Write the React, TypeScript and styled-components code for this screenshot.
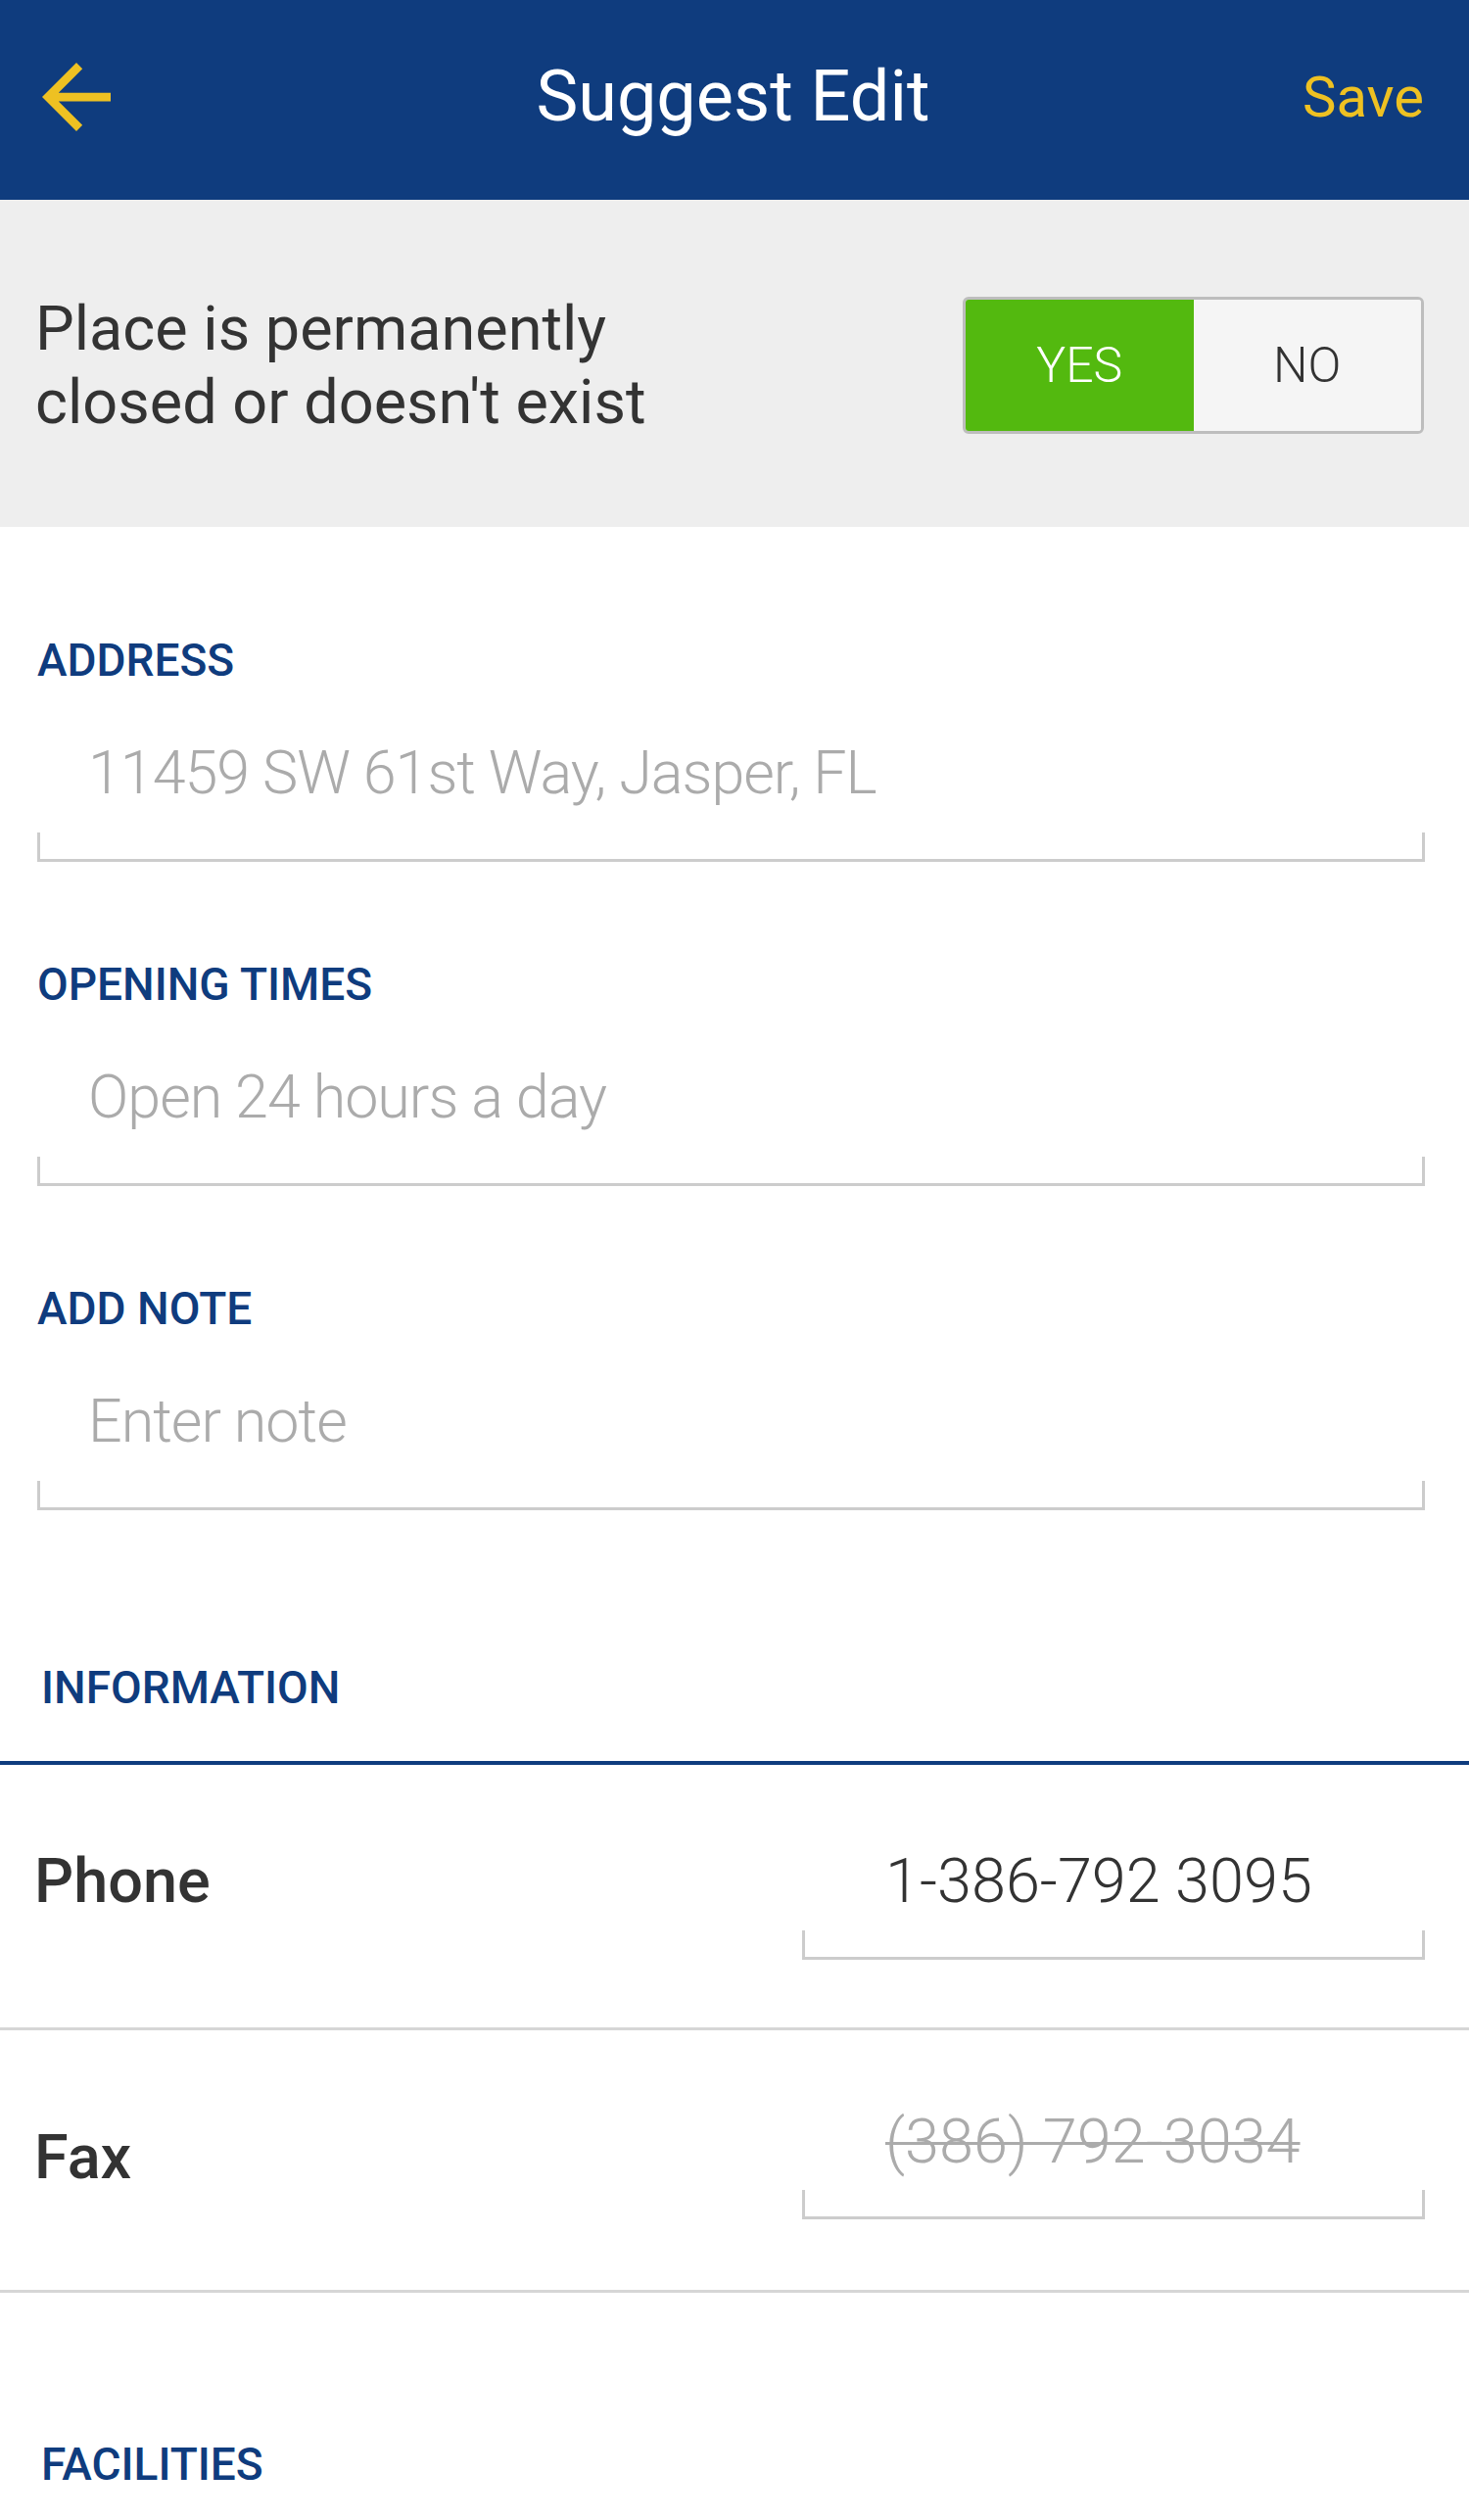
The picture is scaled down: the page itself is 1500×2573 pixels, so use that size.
import React from "react";
import styled, { createGlobalStyle } from "styled-components";

const BLUE = "#0f3c7e";
const YELLOW = "#eec122";

const GlobalStyle = createGlobalStyle`
  html, body {
    margin: 0;
    padding: 0;
    background: #ffffff;
    font-family: Roboto, "Noto Sans", "Liberation Sans", sans-serif;
    -webkit-font-smoothing: antialiased;
  }
  * { box-sizing: border-box; }
`;

const Page = styled.div`
  width: 1500px;
  background: #ffffff;
  padding-bottom: 30px;
`;

const Toolbar = styled.header`
  height: 204px;
  background: ${BLUE};
  display: grid;
  grid-template-columns: 1fr auto 1fr;
  align-items: center;
  padding: 0 46px 6px 43px;
`;

const BackButton = styled.button`
  justify-self: start;
  display: flex;
  align-items: center;
  background: none;
  border: none;
  padding: 0;
  cursor: pointer;
  svg { display: block; }
`;

const Title = styled.h1`
  margin: 0;
  font-weight: 400;
  font-size: 72px;
  line-height: 84px;
  color: #ffffff;
  white-space: nowrap;
`;

const SaveButton = styled.button`
  justify-self: end;
  background: none;
  border: none;
  padding: 0;
  font-family: inherit;
  font-weight: 400;
  font-size: 58px;
  line-height: 70px;
  color: ${YELLOW};
  cursor: pointer;
`;

const ClosedBanner = styled.section`
  height: 334px;
  background: #eeeeee;
  display: flex;
  align-items: center;
  justify-content: space-between;
  padding: 4px 46px 0 36px;
`;

const ClosedText = styled.p`
  margin: 0;
  font-size: 63px;
  line-height: 75px;
  color: #333333;
`;

const Toggle = styled.div`
  display: flex;
  width: 471px;
  height: 140px;
  border: 3px solid #bdbdbd;
  border-radius: 6px;
  overflow: hidden;
  background: #f5f5f5;
`;

const ToggleOption = styled.button<{ $active?: boolean }>`
  flex: 1;
  display: flex;
  align-items: center;
  justify-content: center;
  border: none;
  padding: 0;
  font-family: inherit;
  font-weight: 300;
  font-size: 50px;
  background: ${(p) => (p.$active ? "#53b90f" : "#f5f5f5")};
  color: ${(p) => (p.$active ? "#ffffff" : "#333333")};
  cursor: pointer;
`;

const Form = styled.section`
  padding: 109px 45px 0 38px;
  display: flex;
  flex-direction: column;
  gap: 98px;
`;

const Field = styled.div`
  display: flex;
  flex-direction: column;
`;

const SectionLabel = styled.h2`
  margin: 0;
  font-weight: 500;
  font-size: 46px;
  line-height: 54px;
  color: ${BLUE};
`;

const FieldValue = styled.div<{ $placeholder?: boolean }>`
  margin-top: 52px;
  padding-left: 52px;
  font-weight: 300;
  font-size: 61px;
  line-height: 72px;
  letter-spacing: -1px;
  color: ${(p) => (p.$placeholder ? "#ababab" : "#333333")};
  white-space: nowrap;
`;

const Bracket = styled.div<{ $gap: number }>`
  margin-top: ${(p) => p.$gap}px;
  height: 30px;
  border: 3px solid #cccccc;
  border-top: none;
`;

const InfoHeader = styled.div`
  margin-top: 154px;
  padding: 0 45px 48px 42px;
  border-bottom: 4px solid ${BLUE};
`;

const InfoRow = styled.div<{ $labelTop: number; $valueTop: number; $height: number }>`
  height: ${(p) => p.$height}px;
  display: flex;
  align-items: flex-start;
  justify-content: space-between;
  padding: 0 45px 0 35px;
  border-bottom: 3px solid #d6d6d6;

  & > :first-child {
    margin-top: ${(p) => p.$labelTop}px;
  }
  & > :last-child {
    margin-top: ${(p) => p.$valueTop}px;
  }
`;

const InfoLabel = styled.div`
  font-weight: 500;
  font-size: 63px;
  line-height: 74px;
  color: #333333;
`;

const InfoInput = styled.div`
  width: 636px;
  display: flex;
  flex-direction: column;
`;

const InfoValue = styled.div<{ $struck?: boolean }>`
  padding-left: 85px;
  font-weight: 300;
  font-size: 63px;
  line-height: 74px;
  white-space: nowrap;
  color: ${(p) => (p.$struck ? "#ababab" : "#333333")};
  text-decoration: ${(p) => (p.$struck ? "line-through" : "none")};
  text-decoration-thickness: 3px;
`;

const FacilitiesHeader = styled.div`
  padding: 148px 45px 0 42px;
`;

const ArrowIcon = () => (
  <svg width="70" height="70" viewBox="4 4 16 16" aria-hidden="true">
    <path
      d="M20 11H7.83l5.59-5.59L12 4l-8 8 8 8 1.41-1.41L7.83 13H20v-2z"
      fill={YELLOW}
    />
  </svg>
);

export default function App() {
  return (
    <Page>
      <GlobalStyle />
      <Toolbar>
        <BackButton aria-label="Back">
          <ArrowIcon />
        </BackButton>
        <Title>Suggest Edit</Title>
        <SaveButton>Save</SaveButton>
      </Toolbar>

      <ClosedBanner>
        <ClosedText>
          Place is permanently
          <br />
          closed or doesn't exist
        </ClosedText>
        <Toggle>
          <ToggleOption $active>YES</ToggleOption>
          <ToggleOption>NO</ToggleOption>
        </Toggle>
      </ClosedBanner>

      <Form>
        <Field>
          <SectionLabel>ADDRESS</SectionLabel>
          <FieldValue $placeholder>11459 SW 61st Way, Jasper, FL</FieldValue>
          <Bracket $gap={25} />
        </Field>
        <Field>
          <SectionLabel>OPENING TIMES</SectionLabel>
          <FieldValue $placeholder>Open 24 hours a day</FieldValue>
          <Bracket $gap={25} />
        </Field>
        <Field>
          <SectionLabel>ADD NOTE</SectionLabel>
          <FieldValue $placeholder>Enter note</FieldValue>
          <Bracket $gap={25} />
        </Field>
      </Form>

      <InfoHeader>
        <SectionLabel>INFORMATION</SectionLabel>
      </InfoHeader>

      <InfoRow $height={271} $labelTop={82} $valueTop={82}>
        <InfoLabel>Phone</InfoLabel>
        <InfoInput>
          <InfoValue>1-386-792 3095</InfoValue>
          <Bracket $gap={13} />
        </InfoInput>
      </InfoRow>

      <InfoRow $height={268} $labelTop={93} $valueTop={77}>
        <InfoLabel>Fax</InfoLabel>
        <InfoInput>
          <InfoValue $struck>(386) 792-3034</InfoValue>
          <Bracket $gap={12} />
        </InfoInput>
      </InfoRow>

      <FacilitiesHeader>
        <SectionLabel>FACILITIES</SectionLabel>
      </FacilitiesHeader>
    </Page>
  );
}
